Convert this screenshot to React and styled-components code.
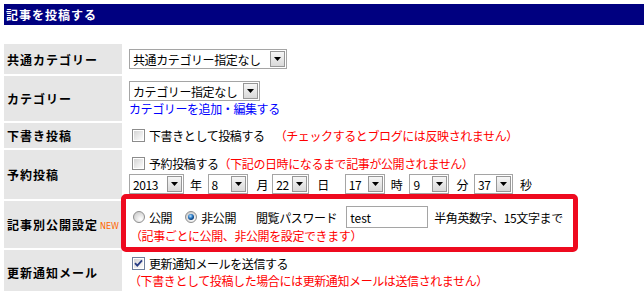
import React from 'react'
import styled, { createGlobalStyle } from 'styled-components'

const GlobalStyle = createGlobalStyle`
  html, body {
    margin: 0;
    padding: 0;
    background: #fff;
  }
  body {
    font-family: "Noto Sans CJK JP", "Noto Sans", sans-serif;
    font-size: 12px;
    color: #000;
  }
`

const Checkbox = ({ checked }) => (
  <svg width="13" height="13" viewBox="0 0 13 13">
    <defs>
      <linearGradient id={checked ? 'cbOn' : 'cbOff'} x1="0" y1="0" x2="1" y2="1">
        <stop offset="0" stopColor="#d4d4d4" />
        <stop offset="1" stopColor="#fdfdfd" />
      </linearGradient>
    </defs>
    <rect x="0.5" y="0.5" width="12" height="12" fill="#fff" stroke={checked ? '#6d7f9c' : '#8c8c8c'} />
    <rect x="2" y="2" width="9" height="9" fill={`url(#${checked ? 'cbOn' : 'cbOff'})`} />
    {checked && (
      <path d="M3 6.2 L5.3 8.6 L10 3.3" stroke="#283c84" strokeWidth="1.8" fill="none" />
    )}
  </svg>
)

const Radio = ({ checked }) => (
  <svg width="12" height="12" viewBox="0 0 12 12">
    <defs>
      <radialGradient id="rdOff" cx="0.65" cy="0.7" r="0.7">
        <stop offset="0" stopColor="#ffffff" />
        <stop offset="1" stopColor="#cfcfcf" />
      </radialGradient>
      <radialGradient id="rdOn" cx="0.4" cy="0.35" r="0.6">
        <stop offset="0" stopColor="#bfe4ff" />
        <stop offset="0.6" stopColor="#2a79c4" />
        <stop offset="1" stopColor="#0d3f7a" />
      </radialGradient>
    </defs>
    <circle cx="6" cy="6" r="5.5" fill="url(#rdOff)" stroke="#8f8f8f" />
    {checked && <circle cx="6" cy="6" r="3" fill="url(#rdOn)" />}
  </svg>
)

const Arrow = () => (
  <svg width="7" height="4" viewBox="0 0 7 4">
    <polygon points="0,0 7,0 3.5,4" fill="#000" />
  </svg>
)

const Select = ({ w, children }) => (
  <SelectBox $w={w}>
    <span>{children}</span>
    <DropButton>
      <Arrow />
    </DropButton>
  </SelectBox>
)

const App = () => {
  return (
    <Page>
      <GlobalStyle />
      <Heading>記事を投稿する</Heading>
      <Form>
        <Label>共通カテゴリー</Label>
        <Value>
          <Line $h={20}>
            <Select w={158}>共通カテゴリー指定なし</Select>
          </Line>
        </Value>

        <Label>カテゴリー</Label>
        <Value>
          <Line $h={20}>
            <Select w={131}>カテゴリー指定なし</Select>
          </Line>
          <Line $h={15}>
            <BlueLink href="#">カテゴリーを追加・編集する</BlueLink>
          </Line>
        </Value>

        <Label>下書き投稿</Label>
        <Value>
          <Line $h={15}>
            <Box>
              <Checkbox />
            </Box>
            下書きとして投稿する
            <Note $ml={10}>（チェックするとブログには反映されません）</Note>
          </Line>
        </Value>

        <Label>予約投稿</Label>
        <Value $gap={2}>
          <Line $h={17}>
            <Box>
              <Checkbox />
            </Box>
            予約投稿する
            <Note>（下記の日時になるまで記事が公開されません）</Note>
          </Line>
          <Line $h={20}>
            <Select w={55}>2013</Select>
            <Unit $ml={6} $mr={6}>年</Unit>
            <Select w={40}>8</Select>
            <Unit $ml={9} $mr={4}>月</Unit>
            <Select w={37}>22</Select>
            <Unit $ml={8} $mr={16}>日</Unit>
            <Select w={40}>17</Select>
            <Unit $ml={6} $mr={7}>時</Unit>
            <Select w={40}>9</Select>
            <Unit $ml={7} $mr={6}>分</Unit>
            <Select w={39}>37</Select>
            <Unit $ml={7}>秒</Unit>
          </Line>
        </Value>

        <Label>
          記事別公開設定<NewMark>NEW</NewMark>
        </Label>
        <Value>
          <Line $h={22}>
            <RadioBox $ml={4}>
              <Radio />
            </RadioBox>
            公開
            <RadioBox $ml={13}>
              <Radio checked />
            </RadioBox>
            非公開
            <Unit $ml={20} $mr={9}>閲覧パスワード</Unit>
            <TextInput defaultValue="test" />
            <Unit $ml={6}>半角英数字、15文字まで</Unit>
          </Line>
          <Line $h={15}>
            <Note $ml={1}>（記事ごとに公開、非公開を設定できます）</Note>
          </Line>
          <Annotation />
        </Value>

        <Label>更新通知メール</Label>
        <Value>
          <Line $h={17}>
            <Box>
              <Checkbox checked />
            </Box>
            更新通知メールを送信する
          </Line>
          <Line $h={17}>
            <Note>（下書きとして投稿した場合には更新通知メールは送信されません）</Note>
          </Line>
        </Value>
      </Form>
    </Page>
  )
}

export default App

const Page = styled.div`
  padding: 4px 0 0 4px;
  width: 640px;
`
const Heading = styled.h2`
  margin: 0;
  height: 21px;
  background: #000080;
  color: #fff;
  font-size: 12px;
  font-weight: bold;
  letter-spacing: 1px;
  line-height: 21px;
  padding-left: 2px;
`
const Form = styled.div`
  display: grid;
  grid-template-columns: 118px 1fr;
  gap: 2px;
  margin-top: 19px;
`
const Label = styled.div`
  background: #e6e6e6;
  display: flex;
  align-items: center;
  padding-left: 3px;
  font-weight: bold;
  letter-spacing: 1px;
  white-space: nowrap;
`
const NewMark = styled.span`
  font-family: "DejaVu Sans", Verdana, sans-serif;
  font-size: 8px;
  font-weight: normal;
  letter-spacing: 0;
  color: #ff6600;
  margin-left: 2px;
  margin-top: 3px;
`
const Value = styled.div`
  position: relative;
  padding: 5px 5px;
  display: flex;
  flex-direction: column;
  gap: ${p => p.$gap || 0}px;
  letter-spacing: -0.4px;
`
const Line = styled.div`
  display: flex;
  align-items: center;
  height: ${p => p.$h || 16}px;
  white-space: nowrap;
`
const SelectBox = styled.span`
  display: inline-flex;
  align-items: center;
  justify-content: space-between;
  box-sizing: border-box;
  width: ${p => p.$w}px;
  height: 20px;
  border: 1px solid #a5a5a5;
  padding: 0 1px 0 3px;
  background: #fff;
  flex-shrink: 0;
`
const DropButton = styled.span`
  width: 15px;
  height: 16px;
  box-sizing: border-box;
  border: 1px solid #979797;
  background: linear-gradient(#f6f6f6, #d9d9d9);
  display: flex;
  align-items: center;
  justify-content: center;
`
const Unit = styled.span`
  margin-left: ${p => p.$ml || 0}px;
  margin-right: ${p => p.$mr || 0}px;
`
const BlueLink = styled.a`
  color: #0000ff;
  text-decoration: none;
`
const Box = styled.span`
  display: inline-flex;
  margin: 0 4px 0 3px;
`
const RadioBox = styled.span`
  display: inline-flex;
  margin-left: ${p => p.$ml || 0}px;
  margin-right: 4px;
`
const Note = styled.span`
  color: #ff0000;
  margin-left: ${p => p.$ml || 0}px;
`
const TextInput = styled.input`
  box-sizing: border-box;
  width: 82px;
  height: 22px;
  border: 1px solid #a5a5a5;
  padding: 0 3px;
  font-family: inherit;
  font-size: 12px;
  letter-spacing: 0;
  color: #000;
  outline: none;
`
const Annotation = styled.span`
  position: absolute;
  left: -3px;
  top: -7px;
  width: 457px;
  height: 58px;
  box-sizing: border-box;
  border: 5px solid #ee0a1f;
  border-radius: 5px;
  pointer-events: none;
`
